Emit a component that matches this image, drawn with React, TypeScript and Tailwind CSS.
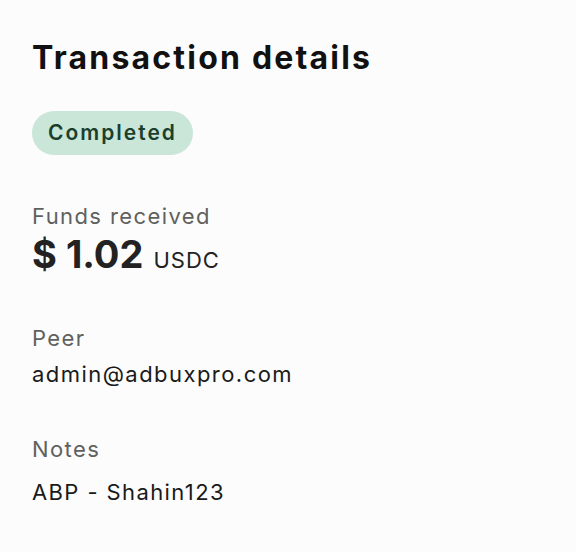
import React from "react";

export default function App() {
  return (
    <div
      className="min-h-[552px] w-[576px] bg-[#fcfcfc] px-[32px] pt-[38px]"
      style={{ fontFamily: "Inter, 'Noto Sans', sans-serif" }}
    >
      {/* Header */}
      <h1 className="text-[32px] font-bold leading-[40px] tracking-[2.2px] text-[#111]">
        Transaction details
      </h1>

      {/* Status badge */}
      <div className="mt-[33px] inline-flex h-[44px] items-center rounded-full bg-[#c9e6d9] px-[16px]">
        <span className="text-[21px] font-semibold tracking-[2px] text-[#1b3f2d]">Completed</span>
      </div>

      {/* Amount */}
      <div className="mt-[47px]">
        <div className="text-[22px] leading-[28px] tracking-[1.4px] text-[#5f615e]">Funds received</div>
        <div className="mt-[2px] flex items-baseline gap-[10px]">
          <span className="text-[38px] font-bold leading-[44px] text-[#222]">$ 1.02</span>
          <span className="text-[22px] tracking-[1px] text-[#222]">USDC</span>
        </div>
      </div>

      {/* Peer */}
      <div className="mt-[47px]">
        <div className="text-[22px] leading-[28px] tracking-[1.4px] text-[#5f615e]">Peer</div>
        <div className="mt-[8px] text-[22px] leading-[28px] tracking-[1.45px] text-[#1a1a1a]">
          admin@adbuxpro.com
        </div>
      </div>

      {/* Notes */}
      <div className="mt-[47px]">
        <div className="text-[22px] leading-[28px] tracking-[1.4px] text-[#5f615e]">Notes</div>
        <div className="mt-[15px] text-[22px] leading-[28px] tracking-[1.4px] text-[#1a1a1a]">
          ABP - Shahin123
        </div>
      </div>
    </div>
  );
}
